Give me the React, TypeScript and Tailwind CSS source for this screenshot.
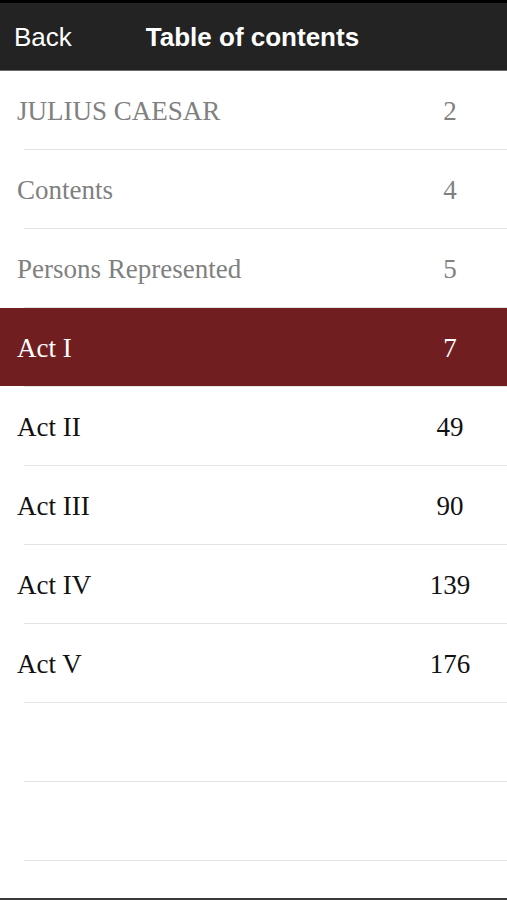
const entries = [
  { title: 'JULIUS CAESAR', page: 2, front: true },
  { title: 'Contents', page: 4, front: true },
  { title: 'Persons Represented', page: 5, front: true },
  { title: 'Act I', page: 7, active: true },
  { title: 'Act II', page: 49 },
  { title: 'Act III', page: 90 },
  { title: 'Act IV', page: 139 },
  { title: 'Act V', page: 176 },
  { title: '', page: null },
  { title: '', page: null },
]

export default function App() {
  return (
    <div className="flex h-[900px] w-[507px] flex-col overflow-hidden bg-white">
      <header
        className="flex h-[71px] shrink-0 items-center border-t-[3px] border-b border-t-black border-b-[#6a6a6a] bg-[#232323] pt-[2px] text-white"
        style={{ fontFamily: '"Liberation Sans", Arial, sans-serif' }}
      >
        <button className="pl-[14px] text-[26px]">Back</button>
        <h1 className="ml-[74px] text-[26px] font-bold">Table of contents</h1>
      </header>

      <ul className="flex-1" style={{ fontFamily: '"Liberation Serif", "Times New Roman", serif' }}>
        {entries.map((entry, i) => (
          <li key={i} className="flex h-[79px] flex-col">
            <div
              className={
                entry.active
                  ? 'flex flex-1 items-center bg-[#711e20] pt-[3px] text-[27px]'
                  : 'flex flex-1 items-center pt-[3px] text-[27px]'
              }
            >
              <span
                className={
                  entry.active
                    ? 'flex-1 pl-[17px] text-white'
                    : entry.front
                      ? 'flex-1 pl-[17px] text-[#808080]'
                      : 'flex-1 pl-[17px] text-[#111111]'
                }
              >
                {entry.title}
              </span>
              <span
                className={
                  entry.active
                    ? 'mr-[17px] w-[80px] text-center text-white'
                    : entry.front
                      ? 'mr-[17px] w-[80px] text-center text-[#808080]'
                      : 'mr-[17px] w-[80px] text-center text-[#111111]'
                }
              >
                {entry.page}
              </span>
            </div>
            <div className="ml-[24px] h-px bg-[#e3e3e3]" />
          </li>
        ))}
      </ul>

      <div className="h-[2px] shrink-0 bg-[#3a3a3a]" />
    </div>
  )
}
